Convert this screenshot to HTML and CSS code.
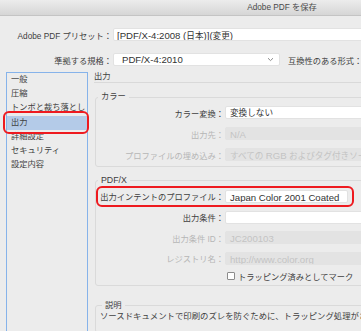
FILE: index.html
```html
<!DOCTYPE html>
<html lang="ja">
<head>
    <meta charset="UTF-8">
    <title>Adobe PDF を保存</title>
    <link rel="stylesheet" href="styles.css">
</head>
<body>

<div class="window">
    <div class="titlebar">Adobe PDF を保存</div>

    <div class="top">
        <div class="top-row">
            <span class="top-label">Adobe PDF プリセット：</span>
            <div class="field preset"><span class="en">[PDF/X-4:2008 (</span>日本<span class="en">)](</span>変更<span class="en">)</span></div>
        </div>
        <div class="top-row">
            <span class="top-label">準拠する規格：</span>
            <div class="field select standard">
                <span class="en">PDF/X-4:2010</span>
                <svg class="chevron" width="7" height="5" viewBox="0 0 7 5"><path d="M1 1.2 L3.5 3.6 L6 1.2" fill="none" stroke="#8a8a8a" stroke-width="1"/></svg>
            </div>
            <span class="compat">互換性のある形式：</span>
        </div>
    </div>

    <div class="main">
        <ul class="nav">
            <li>一般</li>
            <li>圧縮</li>
            <li>トンボと裁ち落とし</li>
            <li class="selected marked">出力</li>
            <li>詳細設定</li>
            <li>セキュリティ</li>
            <li>設定内容</li>
        </ul>

        <div class="panel">
            <div class="panel-title">出力</div>

            <fieldset class="group color-group">
                <legend>カラー</legend>
                <div class="form-row">
                    <span class="label">カラー変換：</span>
                    <div class="field">変換しない</div>
                </div>
                <div class="form-row disabled">
                    <span class="label">出力先：</span>
                    <div class="field en">N/A</div>
                </div>
                <div class="form-row disabled">
                    <span class="label">プロファイルの埋め込み：</span>
                    <div class="field">すべての <span class="en">RGB</span> およびタグ付きソースプロファイルを含む</div>
                </div>
            </fieldset>

            <fieldset class="group pdfx-group">
                <legend class="latin">PDF/X</legend>
                <div class="form-row marked">
                    <span class="label">出力インテントのプロファイル：</span>
                    <div class="field profile en">Japan Color 2001 Coated</div>
                </div>
                <div class="form-row">
                    <span class="label">出力条件：</span>
                    <div class="field"></div>
                </div>
                <div class="form-row disabled">
                    <span class="label">出力条件 ID：</span>
                    <div class="field en">JC200103</div>
                </div>
                <div class="form-row disabled">
                    <span class="label">レジストリ名：</span>
                    <div class="field en">http://www.color.org</div>
                </div>
                <div class="check-row">
                    <span class="checkbox"></span>
                    <span>トラッピング済みとしてマーク</span>
                </div>
            </fieldset>

            <fieldset class="group desc-group">
                <legend>説明</legend>
                <p class="desc">ソースドキュメントで印刷のズレを防ぐために、トラッピング処理がされていることを示します。</p>
            </fieldset>
        </div>
    </div>
</div>

</body>
</html>
```

FILE: styles.css
```css
html, body {
    margin: 0;
    padding: 0;
    overflow: hidden;
}

body {
    font-family: "Liberation Sans", "Noto Sans CJK JP", sans-serif;
    font-size: 8.25px;
    color: #404040;
    background: #ececec;
}

.window {
    width: 564px;
    height: 331px;
    background: #ececec;
}

.titlebar {
    height: 15px;
    line-height: 15px;
    text-align: center;
    color: #4a4a4a;
    background: linear-gradient(#ececec, #d6d6d6);
    border-bottom: 1px solid #c4c4c4;
}

/* top preset rows */
.top {
    padding-top: 12px;
}

.top-row {
    display: flex;
    align-items: center;
    height: 13px;
    margin-bottom: 12px;
}

.top-label {
    width: 112px;
    text-align: right;
    flex-shrink: 0;
    white-space: nowrap;
}

.field {
    height: 13px;
    line-height: 13px;
    box-sizing: border-box;
    padding: 0 4px;
    background: #fff;
    border: 1px solid #e2e2e2;
    border-radius: 2px;
    color: #333;
    font-size: 8.6px;
    white-space: nowrap;
    overflow: hidden;
}

.field .en,
.field.en {
    font-size: 9.6px;
}

.preset {
    margin-left: 1px;
    width: 440px;
    padding-left: 3px;
}

.select {
    display: flex;
    align-items: center;
    justify-content: space-between;
}

.standard {
    margin-left: 1px;
    width: 167px;
    padding-left: 8px;
}

.chevron {
    margin-right: 1px;
}

.compat {
    margin-left: 8px;
    white-space: nowrap;
}

/* main area */
.main {
    display: flex;
    margin-top: -6px;
}

.nav {
    list-style: none;
    margin: 0 0 0 6px;
    padding: 0;
    width: 80px;
    height: 300px;
    border: 1px solid #86b3ea;
    flex-shrink: 0;
}

.nav li {
    height: 14.2px;
    line-height: 14.2px;
    padding-left: 4px;
    white-space: nowrap;
    overflow: hidden;
}

.nav li.selected {
    background: #b4cbe8;
}

.marked {
    position: relative;
}

.marked::after {
    content: "";
    position: absolute;
    border: 2.5px solid #ee1a1f;
    border-radius: 6px;
}

.nav li.marked {
    overflow: visible;
}

.nav li.marked::after {
    left: -4px;
    right: -2px;
    top: -5px;
    bottom: -4px;
}

.panel {
    margin-left: 6px;
    flex: 1;
}

.panel-title {
    height: 10px;
    line-height: 10px;
    border-bottom: 1px solid #d9d9d9;
}

.group {
    margin: 0;
    padding: 0;
    margin-left: 1px;
    border: 1px solid #dadada;
    border-radius: 3px;
    min-width: 0;
}

.group legend {
    padding: 0 3px;
    margin-left: 2px;
    line-height: 10px;
    height: 10px;
}

.group legend.latin {
    font-size: 8.8px;
}

.color-group {
    margin-top: 9px;
    padding-bottom: 1px;
}

.pdfx-group {
    margin-top: 8px;
    padding-top: 1px;
    padding-bottom: 2px;
}

.pdfx-group .form-row {
    height: 20.7px;
}

.desc-group {
    margin-top: 15px;
    padding: 0 4px 10px;
}

.form-row {
    display: grid;
    grid-template-columns: 128px 1fr;
    align-items: center;
    height: 21px;
}

.form-row .label {
    text-align: right;
    white-space: nowrap;
}

.form-row .field {
    margin-left: 1px;
}

.form-row.disabled .label {
    color: #b6b6b6;
}

.form-row.disabled .field {
    background: #e3e3e3;
    border-color: #e3e3e3;
    color: #c4c4c4;
}

.form-row.marked::after {
    left: 0;
    top: 0;
    width: 254px;
    bottom: 0;
}

.field.profile {
    width: 123px;
}

.check-row {
    display: flex;
    align-items: center;
    height: 14px;
    margin-left: 131px;
    gap: 3px;
}

.checkbox {
    width: 6px;
    height: 6px;
    border: 1px solid #8c8c8c;
    border-radius: 1px;
    background: #fff;
}

.desc {
    margin: 0;
    font-size: 8.4px;
    line-height: 11px;
    white-space: nowrap;
}
```
